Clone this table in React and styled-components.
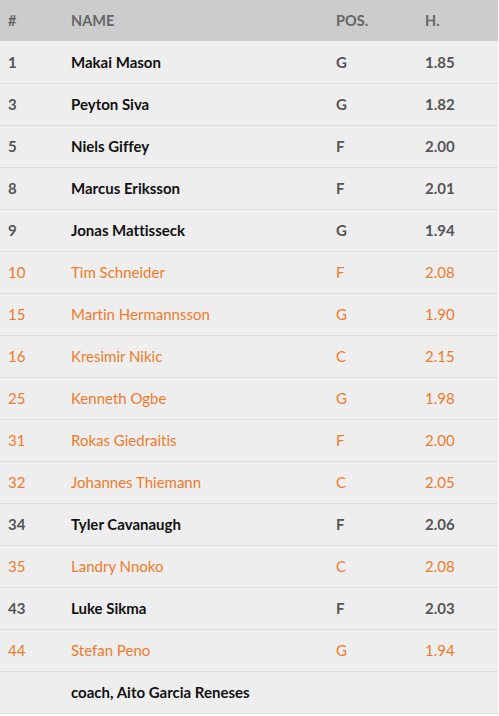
import React from "react";
import styled, { createGlobalStyle } from "styled-components";

const Global = createGlobalStyle`
  html, body { margin: 0; padding: 0; background: #fff; }
  body { font-family: Lato, "Open Sans", Arial, sans-serif; }
`;

const Table = styled.table`
  width: 498px;
  border-collapse: collapse;
  font-family: Lato, sans-serif;
  font-size: 15px;
  font-variant-ligatures: none;
`;

const HeadRow = styled.tr`
  background: #cccccc;
  height: 41px;
`;

const Th = styled.th`
  text-align: left;
  padding: 0 0 0 8px;
  font-weight: 700;
  font-size: 14.5px;
  color: #666666;
  width: ${(p) => p.$w || "auto"};
`;

const Row = styled.tr`
  background: #eeeeee;
  height: 42px;
  border-bottom: 1px solid #dddddd;
`;

const Td = styled.td`
  padding: 0 0 0 8px;
  font-weight: ${(p) => (p.$youth ? 400 : 700)};
  color: ${(p) => (p.$youth ? "#ee7b2b" : p.$dark ? "#111111" : "#555555")};
`;

const players = [
  ["1", "Makai Mason", "G", "1.85", false],
  ["3", "Peyton Siva", "G", "1.82", false],
  ["5", "Niels Giffey", "F", "2.00", false],
  ["8", "Marcus Eriksson", "F", "2.01", false],
  ["9", "Jonas Mattisseck", "G", "1.94", false],
  ["10", "Tim Schneider", "F", "2.08", true],
  ["15", "Martin Hermannsson", "G", "1.90", true],
  ["16", "Kresimir Nikic", "C", "2.15", true],
  ["25", "Kenneth Ogbe", "G", "1.98", true],
  ["31", "Rokas Giedraitis", "F", "2.00", true],
  ["32", "Johannes Thiemann", "C", "2.05", true],
  ["34", "Tyler Cavanaugh", "F", "2.06", false],
  ["35", "Landry Nnoko", "C", "2.08", true],
  ["43", "Luke Sikma", "F", "2.03", false],
  ["44", "Stefan Peno", "G", "1.94", true],
];

export default function App() {
  return (
    <>
      <Global />
      <Table>
        <thead>
          <HeadRow>
            <Th $w="55px">#</Th>
            <Th $w="257px">NAME</Th>
            <Th $w="81px">POS.</Th>
            <Th>H.</Th>
          </HeadRow>
        </thead>
        <tbody>
          {players.map(([n, name, pos, h, youth]) => (
            <Row key={n}>
              <Td $youth={youth}>{n}</Td>
              <Td $youth={youth} $dark>{name}</Td>
              <Td $youth={youth}>{pos}</Td>
              <Td $youth={youth}>{h}</Td>
            </Row>
          ))}
          <Row>
            <Td />
            <Td $dark colSpan={3}>coach, Aito Garcia Reneses</Td>
          </Row>
        </tbody>
      </Table>
    </>
  );
}
